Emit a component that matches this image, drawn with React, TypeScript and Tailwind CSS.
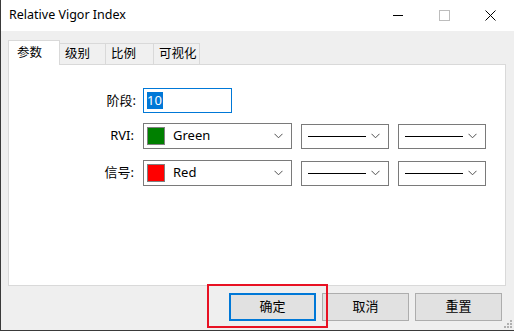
import React from "react";

const font = { fontFamily: '"Segoe UI", "Noto Sans", "Noto Sans CJK SC", sans-serif' };

function Chevron() {
  return (
    <svg width="9" height="6" viewBox="0 0 9 6" className="shrink-0">
      <path d="M0.5 0.8 L4.5 4.8 L8.5 0.8" fill="none" stroke="#505050" strokeWidth="1" />
    </svg>
  );
}

function ColorCombo({ color, name }: { color: string; name: string }) {
  return (
    <div className="w-[149px] h-[26px] border border-[#7a7a7a] bg-white flex items-center pl-[3px] pr-[8px]">
      <span className="w-[18px] h-[18px] border border-[#808080]" style={{ backgroundColor: color }} />
      <span className="ml-[8px] flex-1 text-[13px] text-black">{name}</span>
      <Chevron />
    </div>
  );
}

function LineCombo() {
  return (
    <div className="w-[88px] h-[25px] border border-[#7a7a7a] bg-white flex items-center pl-[6px] pr-[8px]">
      <span className="w-[58px] h-px bg-black" />
      <span className="flex-1" />
      <Chevron />
    </div>
  );
}

export default function App() {
  return (
    <div className="w-[514px] h-[331px] bg-[#3a3a3a] overflow-hidden select-none" style={font}>
      <div className="w-[513px] h-[330px] ml-px flex flex-col bg-[#efefef]">
        {/* title bar */}
        <div className="h-[31px] bg-white flex items-center shrink-0">
          <span className="ml-[8px] text-[12.5px] text-black flex-1">Relative Vigor Index</span>
          <div className="w-[46px] h-[31px] flex items-center justify-center">
            <span className="w-[10px] h-px bg-black" />
          </div>
          <div className="w-[46px] h-[31px] flex items-center justify-center">
            <span className="w-[11px] h-[11px] border border-[#bdbdbd]" />
          </div>
          <div className="w-[46px] h-[31px] flex items-center justify-center mr-[1px]">
            <svg width="11" height="11" viewBox="0 0 11 11">
              <path d="M0.5 0.5 L10.5 10.5 M10.5 0.5 L0.5 10.5" stroke="#000" strokeWidth="1" />
            </svg>
          </div>
        </div>

        {/* tabs */}
        <div className="ml-[7px] mt-[9px] flex items-end h-[24px]">
          <div className="w-[52px] bg-white border border-b-0 border-[#d9d9d9] text-[12.5px] flex items-center pl-[8px] relative z-10 mb-[-1px] h-[25px]">
            参数
          </div>
          {["级别", "比例", "可视化"].map((t, i) => (
            <div
              key={t}
              className={
                "h-[21px] bg-[#f0f0f0] border border-b-0 border-l-0 border-[#d9d9d9] text-[12.5px] flex items-center pl-[5px] " +
                (i === 0 ? "w-[46px]" : i === 1 ? "w-[48px]" : "w-[46px]")
              }
            >
              {t}
            </div>
          ))}
        </div>

        {/* panel */}
        <div className="ml-[7px] w-[498px] h-[222px] bg-white border border-[#d9d9d9] flex flex-col pt-[23px]">
          <div className="flex items-center h-[25px]">
            <span className="w-[127px] text-right text-[13px]">阶段:</span>
            <div className="ml-[7px] w-[89px] h-[25px] border border-[#0078d7] flex items-center pl-[3px]">
              <span className="bg-[#0078d7] text-white text-[13px] leading-[17px] pr-[1px]">10</span>
            </div>
          </div>
          <div className="flex items-center mt-[10px] gap-[9px]">
            <span className="w-[125px] text-right text-[13px]">RVI:</span>
            <ColorCombo color="#008000" name="Green" />
            <LineCombo />
            <LineCombo />
          </div>
          <div className="flex items-center mt-[11px] gap-[9px]">
            <span className="w-[125px] text-right text-[13px]">信号:</span>
            <ColorCombo color="#ff0000" name="Red" />
            <LineCombo />
            <LineCombo />
          </div>
        </div>

        {/* buttons */}
        <div className="flex-1 relative">
          <div className="absolute left-[206px] top-[-2px] w-[121px] h-[44px] border-2 border-[#e81123] pointer-events-none" />
          <div className="flex gap-[6px] ml-[228px] mt-[7px]">
            <button className="w-[87px] h-[28px] bg-[#e1e1e1] border-2 border-[#0078d7] text-[13px]">确定</button>
            <button className="w-[87px] h-[28px] bg-[#e1e1e1] border border-[#adadad] text-[13px]">取消</button>
            <button className="w-[87px] h-[28px] bg-[#e1e1e1] border border-[#adadad] text-[13px]">重置</button>
          </div>
          <svg className="absolute right-[2px] bottom-[2px]" width="8" height="8" viewBox="0 0 8 8">
            <g fill="#b0b0b0">
              <rect x="6" y="0" width="2" height="2" />
              <rect x="3" y="3" width="2" height="2" />
              <rect x="6" y="3" width="2" height="2" />
              <rect x="0" y="6" width="2" height="2" />
              <rect x="3" y="6" width="2" height="2" />
              <rect x="6" y="6" width="2" height="2" />
            </g>
          </svg>
        </div>
      </div>
    </div>
  );
}
